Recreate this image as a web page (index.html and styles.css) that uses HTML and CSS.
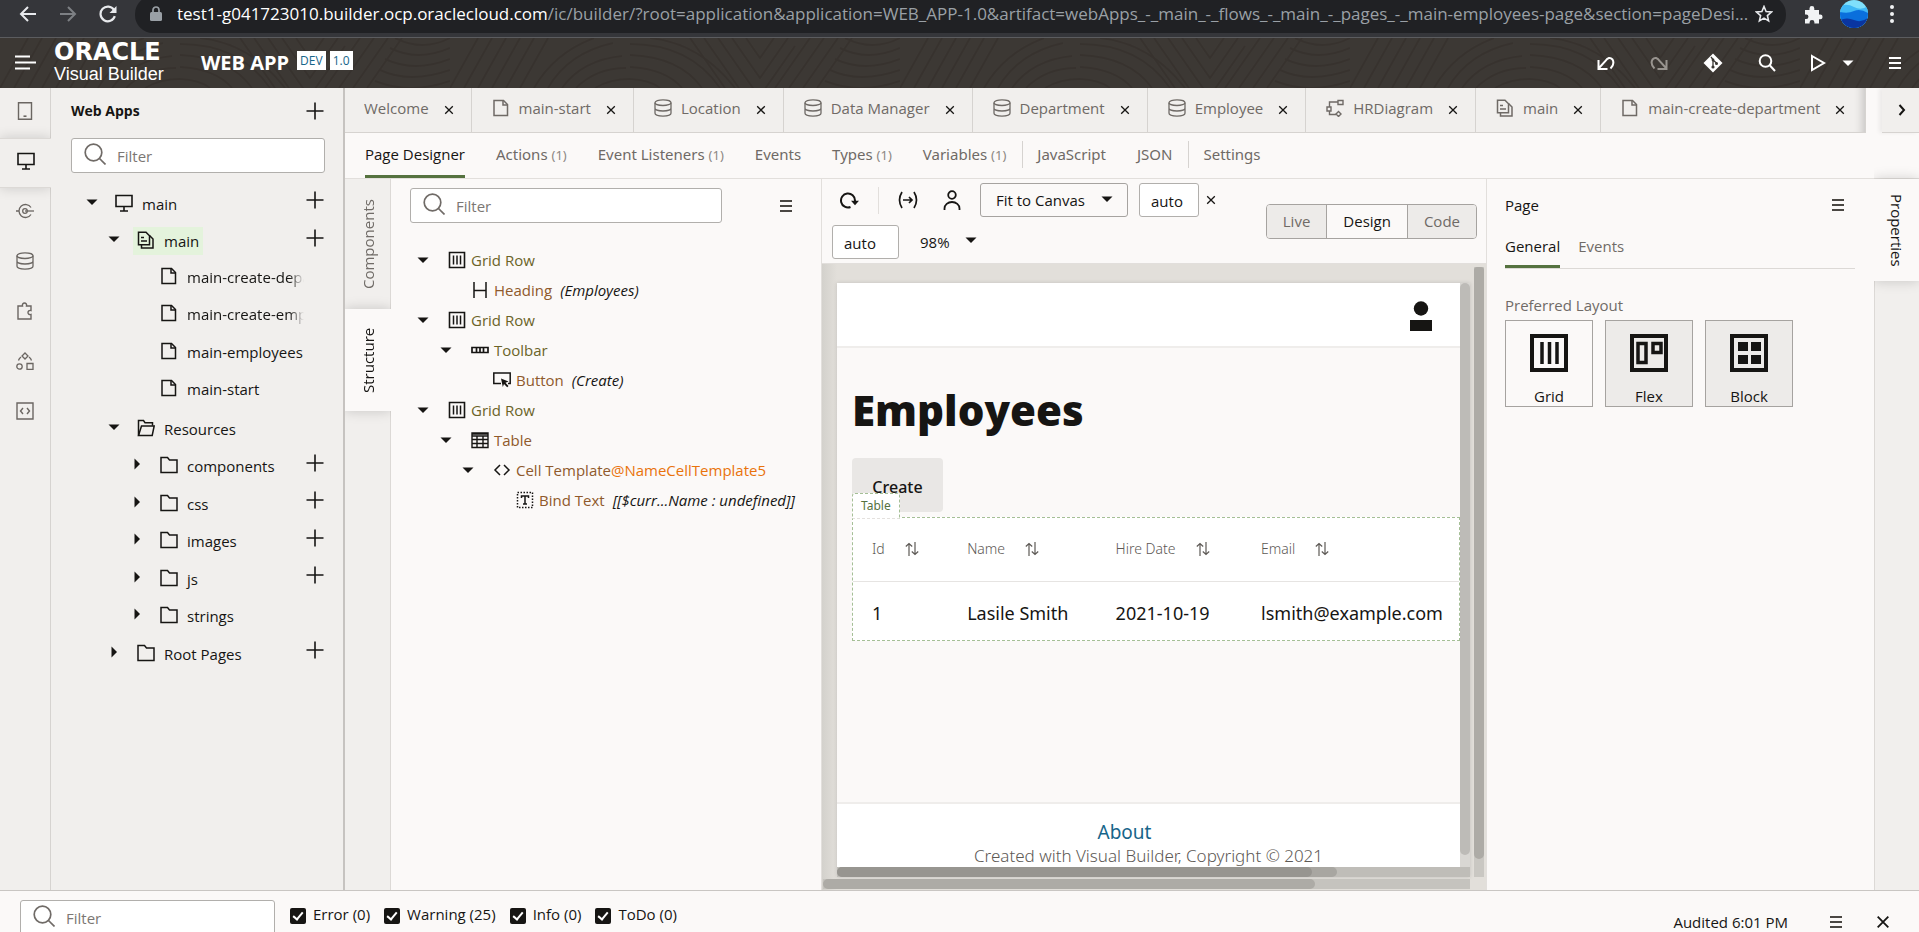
FILE: index.html
```html
<!DOCTYPE html>
<html lang="en">
<head>
<meta charset="utf-8">
<title>Oracle Visual Builder</title>
<link rel="stylesheet" href="styles.css">
</head>
<body>
<svg class="sprite" aria-hidden="true">
  <defs>
    <symbol id="i-caret" viewBox="0 0 12 12"><path d="M0.5 3.5h11L6 9z" fill="currentColor"/></symbol>
    <symbol id="i-caret-right" viewBox="0 0 12 12"><path d="M3.500 0.500v11L9 6z" fill="currentColor"/></symbol>
    <symbol id="i-plus" viewBox="0 0 18 18"><path d="M9 0.500v17M0.500 9h17" stroke="currentColor" stroke-width="1.600" fill="none"/></symbol>
    <symbol id="i-x" viewBox="0 0 10 10"><path d="M1.200 1.200l7.600 7.600M8.800 1.200L1.200 8.800" stroke="currentColor" stroke-width="1.300" fill="none"/></symbol>
    <symbol id="i-menu" viewBox="0 0 12 12"><path d="M0 1h12M0 6h12M0 11h12" stroke="currentColor" stroke-width="2" fill="none"/></symbol>
    <symbol id="i-search" viewBox="0 0 22 22"><g fill="none" stroke="currentColor" stroke-width="1.700"><circle cx="9.500" cy="9.500" r="8.300"/><path d="M15.500 15.500l6 6"/></g></symbol>
    <symbol id="i-page" viewBox="0 0 18 18"><g fill="none" stroke="currentColor" stroke-width="1.500"><path d="M2 1.500h9.500l4 4v11H2z"/><path d="M11 1.500v4.500h4.500"/></g></symbol>
    <symbol id="i-pages" viewBox="0 0 18 18"><g fill="none" stroke="currentColor" stroke-width="1.500"><path d="M1.500 1.200h7.500l3.500 3.500v9h-11z"/><path d="M4 6.500h3M4 10h6M12.500 4.500l3.500 3.500v9H4.500v-3"/></g></symbol>
    <symbol id="i-db" viewBox="0 0 18 18"><g fill="none" stroke="currentColor" stroke-width="1.300"><ellipse cx="9" cy="3.700" rx="8" ry="2.800"/><path d="M1 3.700v10.600c0 1.500 3.600 2.800 8 2.800s8-1.300 8-2.800V3.700M1 9.200c0 1.500 3.600 2.800 8 2.800s8-1.300 8-2.800"/></g></symbol>
    <symbol id="i-diagram" viewBox="0 0 18 18"><g fill="none" stroke="currentColor" stroke-width="1.400"><path d="M12 1.500h5v4h-5zM1 8h4v4H1zM12 3H3.500v5M3.500 12v3.500H10"/><path d="M12.500 12.500l2.500 2.500-2.500 2.500L10 15z"/></g></symbol>
    <symbol id="i-monitor" viewBox="0 0 18 18"><g fill="none" stroke="currentColor" stroke-width="1.600"><path d="M1 1.500h16v11H1zM9 12.500v4M5 17h8"/></g></symbol>
    <symbol id="i-folder" viewBox="0 0 18 18"><path d="M1 1.500h6.500l2 2.500H17v12.500H1z" fill="none" stroke="currentColor" stroke-width="1.500"/></symbol>
    <symbol id="i-folder-open" viewBox="0 0 18 18"><g fill="none" stroke="currentColor" stroke-width="1.500"><path d="M1.500 16.500V1.500h5l1.500 2.200h7.500v3"/><path d="M1.500 16.500L4.500 7H17.200l-2 9.500z"/></g></symbol>
    <symbol id="i-grid" viewBox="0 0 18 18"><path d="M1.500 1.500h15v15h-15z" fill="none" stroke="currentColor" stroke-width="1.600"/><path d="M5.500 4.500v9M9 4.500v9M12.500 4.500v9" stroke="currentColor" stroke-width="1.500"/></symbol>
    <symbol id="i-sort" viewBox="0 0 14 14"><path d="M4 14V1.500M.8 4.500L4 1.500l3.200 3M10 0v12.500M6.800 9.500l3.200 3 3.200-3" fill="none" stroke="currentColor" stroke-width="1.200"/></symbol>
  </defs>
</svg>

<div class="browser">
  <button class="ghost" aria-label="Back"><svg width="18" height="18" viewBox="0 0 18 18"><path d="M17 9H2M9 2L2 9l7 7" fill="none" stroke="#e8eaed" stroke-width="2"/></svg></button>
  <button class="ghost" aria-label="Forward"><svg width="18" height="18" viewBox="0 0 18 18"><path d="M1 9h15M9 2l7 7-7 7" fill="none" stroke="#7d8084" stroke-width="2"/></svg></button>
  <button class="ghost" aria-label="Reload"><svg width="18" height="18" viewBox="0 0 18 18"><path d="M15.800 11.200A7.300 7.300 0 1 1 15 5" fill="none" stroke="#e8eaed" stroke-width="2.200"/><path d="M17.500 1v7h-7z" fill="#e8eaed"/></svg></button>
  <div class="address">
    <svg width="12" height="16" viewBox="0 0 12 16"><rect x="0" y="6" width="12" height="9" rx="1.500" fill="#9aa0a6"/><path d="M3 6V4a3 3 0 0 1 6 0v2" fill="none" stroke="#9aa0a6" stroke-width="1.700"/></svg>
    <span class="url"><span class="host">test1-g041723010.builder.ocp.oraclecloud.com</span>/ic/builder/?root=application&amp;application=WEB_APP-1.0&amp;artifact=webApps_-_main_-_flows_-_main_-_pages_-_main-employees-page&amp;section=pageDesi...</span>
    <button class="ghost" aria-label="Bookmark"><svg width="18" height="18" viewBox="0 0 18 18"><path d="M9 1.500l2.100 5 5.400.5-4.100 3.600 1.200 5.300L9 13.100l-4.600 2.800 1.200-5.300L1.500 7l5.400-.5z" fill="none" stroke="#e8eaed" stroke-width="1.600"/></svg></button>
  </div>
  <button class="ghost" aria-label="Extensions"><svg width="19" height="19" viewBox="0 0 19 19"><path d="M1 5h4.500V3.500a2.400 2.400 0 0 1 4.800 0V5H15v4.500h1.200a2.400 2.400 0 0 1 0 4.800H15V18.500h-4.600V17.300a2.400 2.400 0 0 0-4.800 0v1.200H1V14h1.200a2.200 2.200 0 0 0 0-4.500H1z" fill="#f1f3f4"/></svg></button>
  <svg class="avatar" width="28" height="28" viewBox="0 0 28 28"><defs><clipPath id="av"><circle cx="14" cy="14" r="14"/></clipPath></defs><g clip-path="url(#av)"><rect width="28" height="28" fill="#7fe0fb"/><path d="M0 6q7-3 14 1t14-1v22H0z" fill="#3fb8f5"/><path d="M0 12q8 2 14-1t14 2v15H0z" fill="#0a6fdc"/><path d="M0 20q7-3 14 0t14-2v10H0z" fill="#0a35a0"/></g></svg>
  <button class="ghost" aria-label="Browser menu"><svg width="4" height="18" viewBox="0 0 4 18"><g fill="#f1f3f4"><circle cx="2" cy="2" r="2"/><circle cx="2" cy="9" r="2"/><circle cx="2" cy="16" r="2"/></g></svg></button>
</div>

<header class="top">
  <svg class="waves" aria-hidden="true" width="100%" height="100%">
    <defs>
      <pattern id="wave" width="450" height="50" patternUnits="userSpaceOnUse">
        <g fill="none" stroke="#37322e" stroke-width="2">
          <path d="M0 50L28 0M14 50L42 0M28 50L56 0M42 50L70 0M56 50L84 0M70 50L98 0M84 50q20-35 60-50M98 50q20-35 65-45M112 50q20-28 60-32M126 50q20-20 50-20M145 50q15-9 35-9"/>
          <path d="M180 6q60 0 90 44M180 17q50 2 72 33M180 29q36 2 52 21M180 41q20 1 30 9M200 0q50 5 85 50"/>
          <path d="M240 0L275 50M254 0L289 50M268 0L303 50M282 0L310 40L338 0M296 0L310 20L324 0M303 50L310 58L345 8M325 50L360 0M339 50L374 0M353 50L388 0M367 50L402 0"/>
          <path d="M395 0q28 14 55 0M390 10q28 14 60 0M385 21q30 14 65 0M380 32q30 14 70 0M375 43q35 14 75 0"/>
        </g>
      </pattern>
    </defs>
    <rect width="100%" height="100%" fill="url(#wave)"/>
  </svg>
  <button class="ghost nav" aria-label="Navigation"><svg width="22" height="16" viewBox="0 0 22 16"><path d="M1 1.500h15M1 7.500h21M1 13.500h15" stroke="#fff" stroke-width="2"/></svg></button>
  <div class="brand"><span class="oracle">ORACLE</span><span class="product">Visual Builder</span></div>
  <span class="appname">WEB APP</span>
  <span class="badge">DEV</span><span class="badge">1.0</span>
  <div class="actions">
    <button class="ghost" aria-label="Undo"><svg width="18" height="14" viewBox="0 0 18 14"><path d="M2 12L8 5.500Q12 -.5 15.500 3.500Q18 8 13.500 12.500M1.500 4v9h9" fill="none" stroke="#fff" stroke-width="2"/></svg></button>
    <button class="ghost" aria-label="Redo"><svg width="18" height="14" viewBox="0 0 18 14"><path d="M16 12L10 5.500Q6 -.5 2.500 3.500Q0 8 4.500 12.500M16.500 4v9h-9" fill="none" stroke="#98948f" stroke-width="2"/></svg></button>
    <button class="ghost" aria-label="Git"><svg width="20" height="20" viewBox="0 0 20 20"><path d="M10 .5l9.500 9.500-9.500 9.500L.5 10z" fill="#fff"/><path d="M8 4l2 2.500v8M10 7l4 3.500" fill="none" stroke="#3a3632" stroke-width="1.300"/><g fill="#3a3632"><circle cx="10" cy="7" r="1.400"/><circle cx="10" cy="14" r="1.600"/><circle cx="13.500" cy="10.500" r="1.500"/></g></svg></button>
    <button class="ghost" aria-label="Search"><svg width="18" height="18" viewBox="0 0 18 18"><g fill="none" stroke="#fff" stroke-width="2"><circle cx="7.500" cy="7" r="5.800"/><path d="M11.500 11l5.500 6"/></g></svg></button>
    <button class="ghost play" aria-label="Preview"><svg width="16" height="18" viewBox="0 0 16 18"><path d="M2 2l12 7-12 7z" fill="none" stroke="#fff" stroke-width="2"/></svg></button>
    <button class="ghost" aria-label="Preview options"><svg width="12" height="12"><use href="#i-caret"/></svg></button>
    <button class="ghost" aria-label="Menu"><svg width="12" height="12"><use href="#i-menu"/></svg></button>
  </div>
</header>

<div class="workspace">
  <nav class="rail" aria-label="Navigator">
    <button class="rail-item" aria-label="Mobile Apps"><svg width="18" height="18" viewBox="0 0 18 18"><path d="M2.500 .8h13v16.400h-13z" fill="none" stroke="currentColor" stroke-width="1.400"/><path d="M7.500 14.200h3" stroke="currentColor" stroke-width="1.600"/></svg></button>
    <button class="rail-item active" aria-label="Web Apps"><svg width="18" height="18"><use href="#i-monitor"/></svg></button>
    <button class="rail-item" aria-label="Services"><svg width="18" height="18" viewBox="0 0 18 18"><g fill="none" stroke="currentColor" stroke-width="1.300"><path d="M15 5.500A6.500 6.500 0 1 0 15 12.500M0 9h3"/><circle cx="9" cy="9" r="2.300"/><path d="M9 9h9"/></g></svg></button>
    <button class="rail-item" aria-label="Business Objects"><svg width="18" height="18"><use href="#i-db"/></svg></button>
    <button class="rail-item" aria-label="Components"><svg width="18" height="18" viewBox="0 0 18 18"><path d="M2 4h4.500c-1-4 5-4 4 0H15v4.500c-4-1-4 5 0 4V17H2z" fill="none" stroke="currentColor" stroke-width="1.400"/></svg></button>
    <button class="rail-item" aria-label="Processes"><svg width="18" height="18" viewBox="0 0 18 18"><g fill="none" stroke="currentColor" stroke-width="1.300"><path d="M9 1l3 3-3 3-3-3zM11 11.500h6v6h-6zM2.500 8.500q.5-2 2.500-3.500M15.500 8.500q-.5-2-2.500-3.500"/><circle cx="3.500" cy="14.500" r="2.700"/></g></svg></button>
    <button class="rail-item" aria-label="Source"><svg width="18" height="18" viewBox="0 0 18 18"><path d="M1 1h16v16H1zM7 6L4.500 9 7 12M11 6l2.500 3-2.500 3" fill="none" stroke="currentColor" stroke-width="1.400"/></svg></button>
  </nav>

  <aside class="apps">
    <div class="apps-head"><h2>Web Apps</h2><button class="ghost" aria-label="New web app"><svg width="18" height="18"><use href="#i-plus"/></svg></button></div>
    <label class="filter"><svg width="22" height="22"><use href="#i-search"/></svg><input type="text" placeholder="Filter" aria-label="Filter web apps"></label>
    <ul class="apptree">
      <li><svg class="tw"><use href="#i-caret"/></svg><a href="#"><svg><use href="#i-monitor"/></svg><span>main</span></a><button class="ghost" aria-label="Add"><svg><use href="#i-plus"/></svg></button></li>
      <li class="l1"><svg class="tw"><use href="#i-caret"/></svg><a href="#" class="selected"><svg><use href="#i-pages"/></svg><span>main</span></a><button class="ghost" aria-label="Add"><svg><use href="#i-plus"/></svg></button></li>
      <li class="l2 leaf"><a href="#" class="fade"><svg><use href="#i-page"/></svg><span>main-create-department</span></a></li>
      <li class="l2 leaf"><a href="#" class="fade"><svg><use href="#i-page"/></svg><span>main-create-employee</span></a></li>
      <li class="l2 leaf"><a href="#"><svg><use href="#i-page"/></svg><span>main-employees</span></a></li>
      <li class="l2 leaf"><a href="#"><svg><use href="#i-page"/></svg><span>main-start</span></a></li>
      <li class="l1"><svg class="tw"><use href="#i-caret"/></svg><a href="#"><svg><use href="#i-folder-open"/></svg><span>Resources</span></a></li>
      <li class="l2"><svg class="tw"><use href="#i-caret-right"/></svg><a href="#"><svg><use href="#i-folder"/></svg><span>components</span></a><button class="ghost" aria-label="Add"><svg><use href="#i-plus"/></svg></button></li>
      <li class="l2"><svg class="tw"><use href="#i-caret-right"/></svg><a href="#"><svg><use href="#i-folder"/></svg><span>css</span></a><button class="ghost" aria-label="Add"><svg><use href="#i-plus"/></svg></button></li>
      <li class="l2"><svg class="tw"><use href="#i-caret-right"/></svg><a href="#"><svg><use href="#i-folder"/></svg><span>images</span></a><button class="ghost" aria-label="Add"><svg><use href="#i-plus"/></svg></button></li>
      <li class="l2"><svg class="tw"><use href="#i-caret-right"/></svg><a href="#"><svg><use href="#i-folder"/></svg><span>js</span></a><button class="ghost" aria-label="Add"><svg><use href="#i-plus"/></svg></button></li>
      <li class="l2"><svg class="tw"><use href="#i-caret-right"/></svg><a href="#"><svg><use href="#i-folder"/></svg><span>strings</span></a></li>
      <li class="l1"><svg class="tw"><use href="#i-caret-right"/></svg><a href="#"><svg><use href="#i-folder"/></svg><span>Root Pages</span></a><button class="ghost" aria-label="Add"><svg><use href="#i-plus"/></svg></button></li>
    </ul>
  </aside>

  <main class="editor">
    <div class="tabrow">
      <div class="tabs">
        <div class="tab"><span>Welcome</span><button class="ghost" aria-label="Close"><svg><use href="#i-x"/></svg></button></div>
        <div class="tab"><svg class="ic"><use href="#i-page"/></svg><span>main-start</span><button class="ghost" aria-label="Close"><svg><use href="#i-x"/></svg></button></div>
        <div class="tab"><svg class="ic"><use href="#i-db"/></svg><span>Location</span><button class="ghost" aria-label="Close"><svg><use href="#i-x"/></svg></button></div>
        <div class="tab"><svg class="ic"><use href="#i-db"/></svg><span>Data Manager</span><button class="ghost" aria-label="Close"><svg><use href="#i-x"/></svg></button></div>
        <div class="tab"><svg class="ic"><use href="#i-db"/></svg><span>Department</span><button class="ghost" aria-label="Close"><svg><use href="#i-x"/></svg></button></div>
        <div class="tab"><svg class="ic"><use href="#i-db"/></svg><span>Employee</span><button class="ghost" aria-label="Close"><svg><use href="#i-x"/></svg></button></div>
        <div class="tab"><svg class="ic"><use href="#i-diagram"/></svg><span>HRDiagram</span><button class="ghost" aria-label="Close"><svg><use href="#i-x"/></svg></button></div>
        <div class="tab"><svg class="ic"><use href="#i-pages"/></svg><span>main</span><button class="ghost" aria-label="Close"><svg><use href="#i-x"/></svg></button></div>
        <div class="tab last"><svg class="ic"><use href="#i-page"/></svg><span>main-create-department</span><button class="ghost" aria-label="Close"><svg><use href="#i-x"/></svg></button></div>
      </div>
      <button class="tab-next" aria-label="More tabs"><svg width="8" height="12" viewBox="0 0 8 12"><path d="M1.500 1l4.500 5-4.500 5" fill="none" stroke="#161513" stroke-width="2"/></svg></button>
    </div>
    <nav class="subtabs">
      <a href="#" class="on">Page Designer</a>
      <a href="#">Actions <small>(1)</small></a>
      <a href="#">Event Listeners <small>(1)</small></a>
      <a href="#">Events</a>
      <a href="#">Types <small>(1)</small></a>
      <a href="#">Variables <small>(1)</small></a>
      <a href="#" class="sep">JavaScript</a>
      <a href="#">JSON</a>
      <a href="#" class="sep">Settings</a>
    </nav>

    <div class="panes">
      <div class="vtabs">
        <button class="vtab components">Components</button>
        <button class="vtab structure on">Structure</button>
      </div>

      <section class="struct">
        <div class="struct-head">
          <label class="filter"><svg width="22" height="22"><use href="#i-search"/></svg><input type="text" placeholder="Filter" aria-label="Filter structure"></label>
          <button class="ghost menu" aria-label="Structure menu"><svg width="12" height="12"><use href="#i-menu"/></svg></button>
        </div>
        <ul class="stree">
          <li><svg class="tw"><use href="#i-caret"/></svg><svg class="ic"><use href="#i-grid"/></svg><span class="olive">Grid Row</span></li>
          <li class="l1 leaf"><svg class="ic" viewBox="0 0 18 18"><path d="M3 1v16M15 1v16M3 9.500h12" fill="none" stroke="currentColor" stroke-width="1.500"/></svg><span class="brown">Heading</span><em>(Employees)</em></li>
          <li><svg class="tw"><use href="#i-caret"/></svg><svg class="ic"><use href="#i-grid"/></svg><span class="olive">Grid Row</span></li>
          <li class="l1"><svg class="tw"><use href="#i-caret"/></svg><svg class="ic" viewBox="0 0 18 18"><path d="M1 6.500h16v5H1zM5.500 6.500v5M9 6.500v5M12.500 6.500v5" fill="none" stroke="currentColor" stroke-width="1.700"/></svg><span class="olive">Toolbar</span></li>
          <li class="l2 leaf"><svg class="ic" viewBox="0 0 18 18"><path d="M8 12.500H.8V2h16.400v10.500H15" fill="none" stroke="currentColor" stroke-width="1.500"/><path d="M8 7.500l7.500 3-3 1.200 3 3.300-1.300 1.300-3.200-3.300L9.800 16z" fill="currentColor"/></svg><span class="brown">Button</span><em>(Create)</em></li>
          <li><svg class="tw"><use href="#i-caret"/></svg><svg class="ic"><use href="#i-grid"/></svg><span class="olive">Grid Row</span></li>
          <li class="l1"><svg class="tw"><use href="#i-caret"/></svg><svg class="ic" viewBox="0 0 18 18"><path d="M1 2h16v14.500H1zM1 3h16M1 8.500h16M1 12.500h16M6 5v11M12 5v11M1 5h16" fill="none" stroke="currentColor" stroke-width="1.400"/></svg><span class="brown">Table</span></li>
          <li class="l2"><svg class="tw"><use href="#i-caret"/></svg><svg class="ic" viewBox="0 0 18 18"><path d="M7 4L2 9l5 5M11 4l5 5-5 5" fill="none" stroke="currentColor" stroke-width="1.500"/></svg><span class="brown">Cell Template</span><span class="orange">@NameCellTemplate5</span></li>
          <li class="l3 leaf"><svg class="ic" viewBox="0 0 18 18"><path d="M1.500 1.500h15v15h-15z" fill="none" stroke="currentColor" stroke-width="1.500" stroke-dasharray="1.500 1.500"/><path d="M5.500 7V5h7v2M9 5v8M7 13h4" fill="none" stroke="currentColor" stroke-width="1.500"/></svg><span class="brown">Bind Text</span><em>[[$curr...Name : undefined]]</em></li>
        </ul>
      </section>

      <section class="design">
        <div class="toolbar">
          <div class="tools">
            <div class="toolrow">
              <button class="ghost reload" aria-label="Reload page"><svg width="20" height="18" viewBox="0 0 20 18"><path d="M11.500 16A7 7 0 1 1 16 9.500V11" fill="none" stroke="#161513" stroke-width="2"/><path d="M12 9.800h8l-4 4.400z" fill="#161513"/></svg></button>
              <span class="rule"></span>
              <button class="ghost" aria-label="Input parameters"><svg width="20" height="18" viewBox="0 0 20 18"><path d="M4 1Q-1 9 4 17M16 1q5 8 0 16M5 9h9M11 6l3 3-3 3" fill="none" stroke="#161513" stroke-width="1.700"/></svg></button>
              <button class="ghost person" aria-label="User role"><svg width="18" height="20" viewBox="0 0 18 20"><g fill="none" stroke="#161513" stroke-width="1.800"><circle cx="9" cy="5" r="3.800"/><path d="M1.500 20v-1.500a7.500 6.500 0 0 1 15 0V20"/></g></svg></button>
              <span class="pick"><select aria-label="Canvas size"><option>Fit to Canvas</option></select><svg width="12" height="12"><use href="#i-caret"/></svg></span>
              <input class="size" type="text" value="auto" aria-label="Width">
              <svg width="10" height="10"><use href="#i-x"/></svg>
            </div>
            <div class="toolrow">
              <input class="size tall" type="text" value="auto" aria-label="Height">
              <span class="pick plain"><select aria-label="Zoom"><option>98%</option></select><svg width="12" height="12"><use href="#i-caret"/></svg></span>
            </div>
          </div>
          <div class="modes"><button>Live</button><button class="on">Design</button><button>Code</button></div>
        </div>
        <div class="canvas">
          <div class="frame">
            <div class="preview">
              <div class="pv-head"><svg width="22" height="30" viewBox="0 0 22 30"><circle cx="11" cy="7.500" r="7.200" fill="#161513"/><path d="M0 19h22v11H0z" fill="#161513"/></svg></div>
              <div class="pv-body">
                <h1>Employees</h1>
                <button class="create">Create</button>
                <div class="tablebox">
                  <span class="tag">Table</span>
                  <table>
                    <thead><tr>
                      <th class="c1">Id<svg class="sort"><use href="#i-sort"/></svg></th>
                      <th class="c2">Name<svg class="sort"><use href="#i-sort"/></svg></th>
                      <th class="c3">Hire Date<svg class="sort"><use href="#i-sort"/></svg></th>
                      <th class="c4">Email<svg class="sort"><use href="#i-sort"/></svg></th>
                    </tr></thead>
                    <tbody><tr><td>1</td><td>Lasile Smith</td><td>2021-10-19</td><td>lsmith@example.com</td></tr></tbody>
                  </table>
                </div>
              </div>
              <div class="pv-foot"><a href="#">About</a><p>Created with Visual Builder, Copyright © 2021</p></div>
            </div>
            <div class="in-v"><i></i></div>
            <div class="in-h"><i class="under"></i><i class="over"></i></div>
          </div>
          <div class="out-v"><i></i></div>
          <div class="out-h"><i></i></div>
        </div>
      </section>

      <section class="props">
        <div class="props-head"><h2>Page</h2><button class="ghost" aria-label="Page menu"><svg width="12" height="12"><use href="#i-menu"/></svg></button></div>
        <nav class="props-tabs"><a href="#" class="on">General</a><a href="#">Events</a></nav>
        <h3>Preferred Layout</h3>
        <div class="layouts">
          <button class="on"><svg width="38" height="38" viewBox="0 0 38 38"><path d="M2 2h34v34H2z" fill="none" stroke="#161513" stroke-width="4"/><path d="M12 8v22M19.500 8v22M27 8v22" stroke="#161513" stroke-width="3.500"/></svg>Grid</button>
          <button><svg width="38" height="38" viewBox="0 0 38 38"><path d="M2 2h34v34H2z" fill="none" stroke="#161513" stroke-width="4"/><path d="M8 9.500h8v19H8zM23 9.500h8v9h-8z" fill="none" stroke="#161513" stroke-width="3.500"/></svg>Flex</button>
          <button><svg width="38" height="38" viewBox="0 0 38 38"><path d="M2 2h34v34H2z" fill="none" stroke="#161513" stroke-width="4"/><path d="M8 8h10v9H8zM21 8h10v9H21zM8 21h10v9H8zM21 21h10v9H21z" fill="#161513"/></svg>Block</button>
        </div>
      </section>
      <div class="vtabs right"><button class="vtab properties on">Properties</button></div>
    </div>
  </main>
</div>

<footer class="audits">
  <label class="filter"><svg width="22" height="22"><use href="#i-search"/></svg><input type="text" placeholder="Filter" aria-label="Filter audits"></label>
  <div class="checks">
    <label><input type="checkbox" checked>Error (0)</label>
    <label><input type="checkbox" checked>Warning (25)</label>
    <label><input type="checkbox" checked>Info (0)</label>
    <label><input type="checkbox" checked>ToDo (0)</label>
  </div>
  <div class="status"><span>Audited 6:01 PM</span><button class="ghost" aria-label="Audit menu"><svg width="12" height="12"><use href="#i-menu"/></svg></button><button class="ghost close" aria-label="Close"><svg width="14" height="14"><use href="#i-x"/></svg></button></div>
</footer>
</body>
</html>
```
FILE: styles.css
```css
* { box-sizing: border-box; }
body {
  margin: 0;
  height: 100vh;
  display: flex;
  flex-direction: column;
  overflow: hidden;
  font: 15px/20px "Open Sans", "Noto Sans", sans-serif;
  color: #161513;
  background: #fbf9f8;
}
button, input, select { font: inherit; color: inherit; }
a { color: inherit; text-decoration: none; }
h1, h2, h3, p, ul { margin: 0; padding: 0; }
ul { list-style: none; }
svg { display: block; flex: none; }
.sprite { position: absolute; width: 0; height: 0; }
.ghost { border: 0; padding: 0; background: none; display: flex; align-items: center; flex: none; }

/* browser bar */
.browser {
  flex: none;
  height: 38px;
  padding: 0 25px 9px 19px;
  display: flex;
  align-items: center;
  background: #35363a;
  border-bottom: 1px solid #5b5c5f;
  gap: 22px;
}
.address {
  flex: 1;
  min-width: 0;
  height: 37px;
  margin: 0 -4px;
  padding: 0 13px 0 15px;
  display: flex;
  align-items: center;
  gap: 15px;
  border-radius: 18px;
  background: #202124;
}
.url {
  flex: 1;
  min-width: 0;
  white-space: nowrap;
  font: 17px/24px "Open Sans", sans-serif;
  color: #9aa0a6;
}
.host { color: #fff; }
.avatar { margin: 0 0 0 -5px; }

/* header */
.top {
  flex: none;
  position: relative;
  height: 50px;
  padding: 0 18px 0 14px;
  display: flex;
  align-items: center;
  background: #3c3834;
  color: #fff;
}
.waves { position: absolute; inset: 0; }
.top > :not(.waves) { position: relative; }
.brand { margin-left: 18px; width: 120px; display: flex; flex-direction: column; }
.oracle { font: bold 24px/22px "DejaVu Sans", sans-serif; }
.product { font: 18px/22px "Liberation Sans", sans-serif; }
.appname { margin-left: 27px; font: 700 20px/28px "Open Sans", sans-serif; }
.badge {
  align-self: flex-start;
  margin: 13px 0 0 4px;
  padding: 0 3px;
  background: #fff;
  color: #17658a;
  font-size: 12px;
  line-height: 19px;
}
.appname + .badge { margin-left: 8px; }
.actions { margin-left: auto; display: flex; align-items: center; gap: 35px; }
.actions .play { margin-left: -1px; }
.actions .play + .ghost { margin-left: -19px; }

/* workspace */
.workspace { flex: 1; min-height: 0; display: flex; background: #f1efed; }
.rail { flex: none; width: 51px; display: flex; flex-direction: column; border-right: 1px solid #d6d3d0; color: #6b6662; }
.rail-item { height: 50px; border: 0; padding: 0 0 4px; background: none; display: flex; align-items: center; justify-content: center; color: inherit; }
.rail-item.active {
  margin-right: -1px;
  color: #161513;
  background: #f1efed;
  border: solid #dcd9d6;
  border-width: 1px 0;
  box-shadow: 0 0 12px rgba(0, 0, 0, .16);
  clip-path: inset(-14px 0 -14px 0);
}
.apps { flex: none; width: 294px; border-right: 2px solid #c6c3c0; }
.apps-head { height: 50px; padding: 0 19px 0 20px; display: flex; align-items: center; justify-content: space-between; }
h2 { font-size: 15px; line-height: 20px; font-weight: 400; }
.apps-head h2 { font-weight: 700; font-size: 14px; padding-bottom: 4px; }
.apps-head .ghost { padding-bottom: 4px; }
.filter {
  display: flex;
  align-items: center;
  gap: 11px;
  height: 35px;
  padding: 0 12px;
  background: #fff;
  border: 1px solid #b1afac;
  border-radius: 3px;
  color: #706b67;
}
.filter svg { margin-bottom: 4px; }
.filter input { flex: 1; min-width: 0; border: 0; padding: 1px 0 0; background: none; outline: 0; }
.filter input::placeholder { color: #7b7773; opacity: 1; }
.apps .filter { margin: 0 18px 0 20px; }
.apptree { margin-top: 12px; }
.apptree li { height: 37px; padding: 0 19px 0 33px; display: flex; align-items: center; }
.apptree li:nth-child(even) { height: 38px; }
.apptree svg { width: 18px; height: 18px; }
.apptree .tw { width: 14px; height: 12px; margin: 0 16px 4px 1px; }
.apptree a { display: flex; align-items: center; gap: 9px; padding: 4px; margin-left: -4px; white-space: nowrap; overflow: hidden; }
.apptree a svg { margin-bottom: 2px; }
.apptree .ghost { margin: 0 0 7px auto; }
.apptree .l1 { padding-left: 55px; }
.apptree .l2 { padding-left: 78px; }
.apptree .leaf { padding: 0 0 4px 109px; }
.apptree .selected { background: #e4f3dc; }
.fade { width: 148px; mask-image: linear-gradient(to right, #000 90%, transparent); }

/* editor */
.editor { flex: 1; min-width: 0; display: flex; flex-direction: column; background: #fbf9f8; }
.tabrow { flex: none; display: flex; justify-content: space-between; height: 45px; }
.tabs { display: flex; min-width: 0; overflow: hidden; }
.tab {
  display: flex;
  align-items: center;
  flex: none;
  padding: 0 17px 4px 20px;
  border: solid #d6d3d0;
  border-width: 0 1px 1px 0;
  background: #f1efed;
  color: #6f6a66;
  white-space: nowrap;
}
.tab:first-child { padding-left: 19px; }
.tab .ic { width: 18px; height: 18px; margin: 0 9px 1px 0; }
.tab .ghost { margin-left: 15px; padding-top: 3px; color: #161513; }
.tab .ghost svg { width: 10px; height: 10px; }
.tab.last { padding-right: 20px; box-shadow: inset -10px 0 10px -8px rgba(0, 0, 0, .2); }
.tab-next { width: 37px; padding: 0 0 0 3px; border: 0; border-bottom: 1px solid #d6d3d0; background: #f1efed; display: flex; align-items: center; justify-content: center; box-shadow: -3px 0 4px rgba(0, 0, 0, .06); }
.subtabs {
  flex: none;
  height: 46px;
  padding: 0 20px;
  display: flex;
  align-items: stretch;
  gap: 31px;
  border-bottom: 1px solid #e2dfdc;
  color: #6f6a66;
  font-family: "Noto Sans", sans-serif;
  line-height: 43px;
  white-space: nowrap;
}
.subtabs small { font-size: 13px; color: #8c8783; }
.subtabs .on { color: #161513; border-bottom: 3px solid #55723f; font-family: "Open Sans", sans-serif; font-weight: 500; }
.subtabs .sep { position: relative; }
.subtabs .sep::before { content: ""; position: absolute; left: -15px; top: 8px; height: 27px; border-left: 1px solid #d6d3d0; }

.panes { flex: 1; min-height: 0; display: flex; }
.vtabs { flex: none; width: 46px; border-right: 1px solid #dcd9d6; background: #f1efed; }
.vtab {
  display: flex;
  align-items: center;
  justify-content: center;
  width: 45px;
  padding: 0;
  border: 0;
  background: none;
  color: #706b67;
  writing-mode: vertical-rl;
}
.vtabs:not(.right) .vtab { transform: rotate(180deg); }
.vtab.on { width: 46px; color: #161513; background: #fbf9f8; box-shadow: 0 0 12px rgba(0, 0, 0, .18); clip-path: inset(-14px 0 -14px 0); }
.components { height: 130px; }
.structure { height: 102px; }
.properties { height: 102px; }
.right { width: 45px; border: 0; border-left: 1px solid #dcd9d6; }
.right .vtab.on { margin-left: -1px; width: 45px; }

.struct { flex: none; width: 430px; padding: 9px 29px 0 19px; }
.struct-head { display: flex; align-items: center; justify-content: space-between; }
.struct-head .filter { width: 312px; }
.menu, .props-head .ghost, .status .ghost { color: #4a4743; }
.stree { margin-top: 22px; }
.stree li { height: 30px; display: flex; align-items: center; white-space: nowrap; padding-left: 7px; }
.stree .tw { width: 12px; height: 12px; margin-right: 19px; }
.stree .ic { width: 18px; height: 18px; margin-right: 5px; }
.stree .l1 { padding-left: 30px; }
.stree .l2 { padding-left: 52px; }
.stree .l1.leaf { padding-left: 61px; }
.stree .l2.leaf { padding-left: 83px; }
.stree .l3.leaf { padding-left: 106px; }
.stree em { margin-left: 8px; }
.olive { color: #6b6428; }
.brown { color: #8f5a2c; }
.orange { color: #e9730c; }

.design { flex: 1; min-width: 0; display: flex; flex-direction: column; border: solid #e2dfdc; border-width: 0 1px; }
.toolbar { flex: none; padding: 4px 9px 4px 10px; display: flex; align-items: center; justify-content: space-between; border-bottom: 1px solid #e2dfdc; }
.tools { display: flex; flex-direction: column; gap: 8px; }
.toolrow { display: flex; align-items: center; }
.reload { padding-left: 7px; }
.rule { height: 27px; margin: 0 19px; border-left: 1px solid #e2dfdc; }
.person { margin: 0 19px 0 25px; }
.pick { position: relative; display: flex; }
.pick select { appearance: none; width: 148px; height: 34px; padding: 0 15px; border: 1px solid #a6a3a0; border-radius: 3px; background: none; }
.pick svg { position: absolute; right: 15px; top: 10px; pointer-events: none; }
.plain select { width: 78px; border-color: transparent; padding: 0 20px; }
.plain svg { right: 0; top: 9px; }
.size { width: 60px; height: 34px; margin: 0 7px 0 11px; padding: 2px 11px 0; border: 1px solid #b1afac; border-radius: 3px; background: #fff; }
.size.tall { width: 67px; margin: 0; }
.modes { display: flex; border: 1px solid #a6a3a0; border-radius: 4px; overflow: hidden; }
.modes button { height: 33px; padding: 0 16px; border: 0; background: #edebe9; color: #6f6a66; }
.modes .on { background: #fbf9f8; color: #161513; border: solid #a6a3a0; border-width: 0 1px; }
.modes .on, .pick select { font-weight: 500; }

.canvas {
  flex: 1;
  min-height: 0;
  display: grid;
  grid-template-columns: minmax(0, 1fr) 10px;
  grid-template-rows: minmax(0, 1fr) 10px;
  gap: 2px 4px;
  padding: 3px 2px 1px 1px;
  background: linear-gradient(to right, #d3d1cc, #e2dfda 15px);
}
.frame {
  margin: 16px 0 0 14px;
  display: grid;
  grid-template-columns: minmax(0, 1fr) 10px;
  grid-template-rows: minmax(0, 1fr) 10px;
  background: #d9d7d3;
  box-shadow: 0 0 4px rgba(0, 0, 0, .14);
}
.preview { display: flex; flex-direction: column; min-height: 0; background: #fbf9f8; font-family: "Noto Sans", sans-serif; }
.pv-head { flex: none; height: 65px; padding: 18px 28px 0; background: #fff; border-bottom: 2px solid #efedeb; display: flex; justify-content: flex-end; }
.pv-body { flex: 1; min-height: 0; padding: 32px 0 0 15px; }
h1 { font: 800 42px/60px "Open Sans", sans-serif; }
.create { display: block; margin-top: 18px; width: 91px; height: 54px; border: 0; border-radius: 4px; padding: 3px 0 0; background: #e9e7e5; font-size: 16px; font-weight: 500; }
.tablebox { position: relative; margin-top: 5px; border: 1px dashed #a5bf96; background: #fff; }
.tag { position: absolute; left: -1px; top: -25px; height: 26px; padding: 2px 8px 0; border: 1px dashed #a5bf96; border-bottom-color: #e4e1de; border-radius: 3px 3px 0 0; background: #fff; color: #55723f; font-size: 12px; }
table { width: 100%; table-layout: fixed; border-collapse: collapse; text-align: left; }
th { height: 63px; padding: 0 0 0 19px; font-weight: 300; font-size: 14px; color: #5d5955; border-bottom: 1px solid #e6e4e2; white-space: nowrap; }
td { height: 59px; padding: 4px 0 0 19px; font-size: 18px; white-space: nowrap; }
.sort { display: inline-block; width: 14px; height: 14px; margin-left: 20px; vertical-align: -2px; }
.c1 { width: 15.7%; }
.c2 { width: 24.5%; }
.c3 { width: 24%; }
.c4 { width: 35.8%; }
.pv-foot { flex: none; height: 65px; padding-top: 16px; border-top: 2px solid #efedeb; background: #fff; text-align: center; line-height: 24px; overflow: hidden; }
.pv-foot a { display: block; padding-right: 48px; color: #17658a; font-size: 19px; }
.pv-foot p { font-size: 17px; font-weight: 300; color: #5d5955; }

.canvas i { display: block; border-radius: 5px; }
.in-v i { height: 98%; background: #bdbbb7; }
.in-h { grid-column: 1 / 3; position: relative; background: #bfbdb8; }
.in-h i { position: absolute; left: 0; top: 0; height: 100%; }
.in-h .under { width: 79%; background: #a8a6a1; }
.in-h .over { width: 75%; background: #979590; }
.out-v { background: #c9c7c2; }
.out-v i { height: 97%; background: #adaba6; border-radius: 3px 3px 5px 5px; }
.out-h { background: #c5c3be; }
.out-h i { height: 100%; width: 76%; background: #adaba6; }

.props { flex: none; width: 387px; padding: 16px 19px 0 18px; }
.props-head { display: flex; align-items: center; justify-content: space-between; padding-right: 11px; }
.props-tabs { display: flex; gap: 18px; height: 54px; border-bottom: 1px solid #dcd9d6; color: #706b67; line-height: 62px; }
.props-tabs .on { color: #161513; border-bottom: 3px solid #55723f; height: 53px; }
h3 { margin-top: 26px; font-size: 15px; font-weight: 400; line-height: 20px; color: #706b67; }
.layouts { display: flex; gap: 12px; margin-top: 5px; }
.layouts button { width: 88px; height: 87px; padding: 13px 0 0; border: 1px solid #a6a3a0; background: #edebe9; display: flex; flex-direction: column; align-items: center; gap: 14px; }
.layouts .on { background: #fbf9f8; }

/* audits bar */
.audits { flex: none; height: 42px; padding: 9px 29px 0 20px; display: flex; align-items: flex-start; border-top: 1px solid #c9c6c3; background: #fbf9f8; }
.audits .filter { width: 255px; }
.checks { display: flex; gap: 14px; margin: 4px 0 0 15px; }
.checks label { display: flex; align-items: center; gap: 7px; }
.checks input { appearance: none; width: 16px; height: 16px; margin: 4px 0 0; border-radius: 2px; background: #161513; display: grid; place-items: center; }
.checks input:checked::after { content: ""; width: 4px; height: 8px; margin-bottom: 2px; border: solid #fff; border-width: 0 2px 2px 0; transform: rotate(40deg); }
.status { margin: 12px 0 0 auto; display: flex; align-items: center; }
.status .ghost { margin-left: 42px; }
.status .close { margin-left: 34px; color: #161513; }
```
